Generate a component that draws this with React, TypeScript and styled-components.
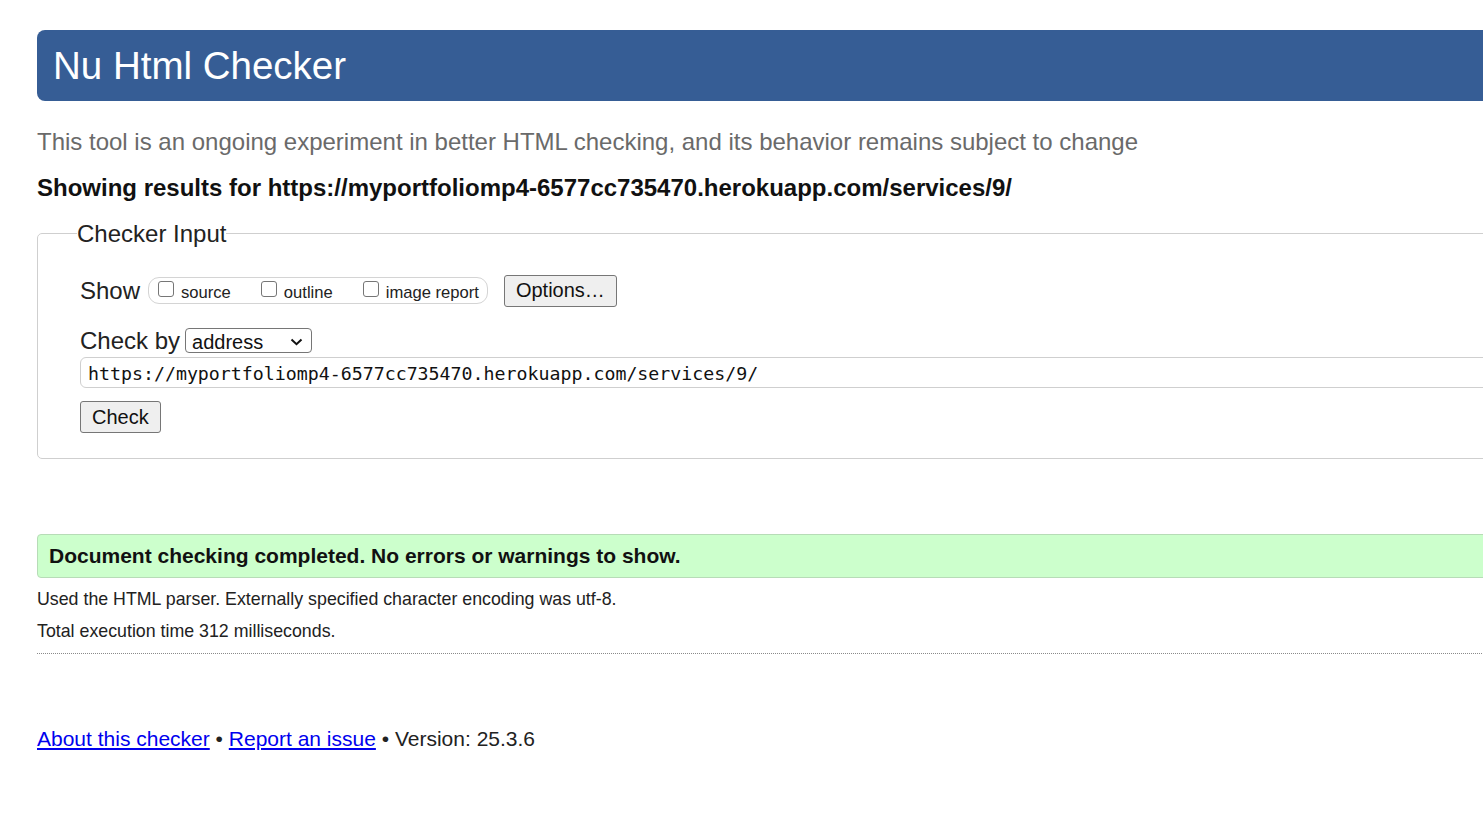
import React from "react";
import styled, { createGlobalStyle } from "styled-components";

const Global = createGlobalStyle`
  html, body { margin: 0; padding: 0; background: #fff; overflow: hidden; }
  body { font-family: "Liberation Sans", Arial, sans-serif; color: #222; }
  * { box-sizing: border-box; }
`;

const Page = styled.div`
  width: 1720px;
  padding: 30px 0 40px 37px;
  display: flex;
  flex-direction: column;
`;

const Header = styled.h1`
  margin: 0;
  background: #365d95;
  color: #fff;
  font-weight: normal;
  font-size: 38.5px;
  line-height: 44px;
  padding: 13.5px 16px;
  border-radius: 8px;
`;

const Intro = styled.p`
  margin: 27px 0 0 0;
  font-size: 24px;
  line-height: 27.6px;
  color: #6a6a6a;
`;

const ResultsFor = styled.p`
  margin: 18px 0 0 0;
  font-size: 24px;
  line-height: 27.6px;
  font-weight: bold;
  color: #111;
`;

const Fieldset = styled.fieldset`
  margin: 19px 0 0 0;
  border: 1px solid #cfcfcf;
  border-radius: 5px;
  padding: 0 0 25px 42px;
  min-width: 0;
`;

const Legend = styled.legend`
  font-size: 24px;
  line-height: 27.6px;
  padding: 0;
  margin-left: -3px;
  color: #222;
`;

const Row = styled.div<{ $mt: number }>`
  display: flex;
  align-items: center;
  margin-top: ${(p) => p.$mt}px;
`;

const Label = styled.span`
  font-size: 24px;
  line-height: 27.6px;
  color: #222;
`;

const Pill = styled.span`
  display: inline-flex;
  align-items: center;
  gap: 30px;
  margin-left: 8px;
  height: 27px;
  padding: 0 8px 0 9px;
  border: 1px solid #d4d4d4;
  border-radius: 11px;
`;

const CheckLabel = styled.label`
  display: inline-flex;
  align-items: center;
  font-size: 16.6px;
  color: #222;
`;

const Box = styled.span`
  display: inline-block;
  width: 16px;
  height: 16px;
  border: 1px solid #767676;
  border-radius: 3px;
  background: #fff;
  margin: 0 7px 4px 0;
`;

const BoxText = styled.span`
  line-height: 19px;
  margin-top: 3px;
`;

const Button = styled.button<{ $ml?: number }>`
  font-family: "Liberation Sans", Arial, sans-serif;
  font-size: 20px;
  height: 32px;
  padding: 0 11px;
  margin: 0 0 0 ${(p) => p.$ml ?? 0}px;
  background: #efefef;
  color: #111;
  border: 1px solid #767676;
  border-radius: 3px;
`;

const Select = styled.div`
  display: inline-flex;
  align-items: center;
  justify-content: space-between;
  width: 127px;
  height: 25px;
  margin-left: 5px;
  padding: 2px 8px 0 6px;
  border: 1px solid #767676;
  border-radius: 4px;
  font-size: 20px;
  line-height: 22px;
  color: #111;
  background: #fff;
`;

const UrlInput = styled.div`
  margin-top: 3px;
  height: 31px;
  border: 1px solid #cfcfcf;
  border-radius: 6px;
  padding: 1px 7px 0;
  display: flex;
  align-items: center;
  font-family: "DejaVu Sans Mono", "Liberation Mono", monospace;
  font-size: 18.25px;
  color: #111;
  white-space: nowrap;
`;

const CheckRow = styled.div`
  margin-top: 13px;
`;

const Success = styled.p`
  margin: 75px 0 0 0;
  background: #ccffcc;
  border: 1px solid #b7dcb7;
  border-radius: 4px;
  padding: 9px 11px;
  font-size: 21px;
  line-height: 24px;
  font-weight: bold;
  color: #111;
`;

const Details = styled.p<{ $mt: number }>`
  margin: ${(p) => p.$mt}px 0 0 0;
  font-size: 17.8px;
  line-height: 20.5px;
  color: #222;
`;

const Divider = styled.hr`
  margin: 11px 0 0 0;
  border: 0;
  border-top: 1px dotted #8a8a8a;
  height: 0;
`;

const Footer = styled.p`
  margin: 73px 0 0 0;
  font-size: 21px;
  line-height: 24px;
  color: #222;
`;

const Link = styled.a`
  color: #0000ee;
  text-decoration: underline;
`;

const Chevron = () => (
  <svg width="13" height="8" viewBox="0 0 13 8">
    <path d="M1.5 1.5 L6.5 6.2 L11.5 1.5" fill="none" stroke="#111" strokeWidth="2" />
  </svg>
);

export default function App() {
  return (
    <>
      <Global />
      <Page>
        <Header>Nu Html Checker</Header>
        <Intro>
          This tool is an ongoing experiment in better HTML checking, and its behavior remains subject to change
        </Intro>
        <ResultsFor>Showing results for https://myportfoliomp4-6577cc735470.herokuapp.com/services/9/</ResultsFor>
        <Fieldset>
          <Legend>Checker Input</Legend>
          <Row $mt={27}>
            <Label>Show</Label>
            <Pill>
              <CheckLabel>
                <Box />
                <BoxText>source</BoxText>
              </CheckLabel>
              <CheckLabel>
                <Box />
                <BoxText>outline</BoxText>
              </CheckLabel>
              <CheckLabel>
                <Box />
                <BoxText>image report</BoxText>
              </CheckLabel>
            </Pill>
            <Button $ml={16}>Options…</Button>
          </Row>
          <Row $mt={20}>
            <Label>Check by</Label>
            <Select>
              <span>address</span>
              <Chevron />
            </Select>
          </Row>
          <UrlInput>https://myportfoliomp4-6577cc735470.herokuapp.com/services/9/</UrlInput>
          <CheckRow>
            <Button>Check</Button>
          </CheckRow>
        </Fieldset>
        <Success>Document checking completed. No errors or warnings to show.</Success>
        <Details $mt={11}>Used the HTML parser. Externally specified character encoding was utf-8.</Details>
        <Details $mt={11.5}>Total execution time 312 milliseconds.</Details>
        <Divider />
        <Footer>
          <Link href="#">About this checker</Link> • <Link href="#">Report an issue</Link> • Version: 25.3.6
        </Footer>
      </Page>
    </>
  );
}
